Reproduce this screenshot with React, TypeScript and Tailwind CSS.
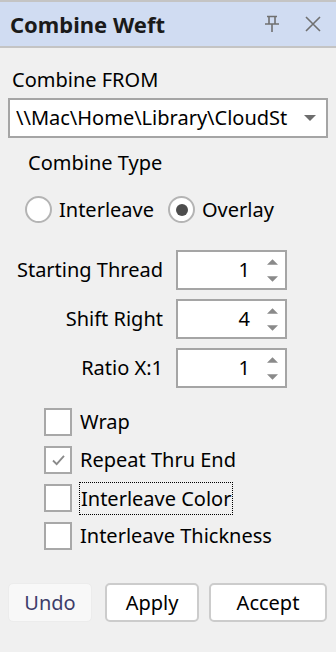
import { useState } from 'react';

const PinIcon = () => (
  <svg width="16" height="18" viewBox="0 0 16 18" fill="none" stroke="#707070" strokeWidth="1.6">
    <path d="M3 1.5h10M5 1.5v7M11 1.5v7M1 9h14M8 9v8" />
  </svg>
);

const CloseIcon = () => (
  <svg width="18" height="18" viewBox="0 0 18 18" fill="none" stroke="#707070" strokeWidth="1.6">
    <path d="M2 2l14 14M16 2L2 16" />
  </svg>
);

const SpinArrows = () => (
  <div className="flex flex-col items-center justify-center gap-[11px] w-[20px]">
    <svg width="11" height="6" viewBox="0 0 12 6">
      <path d="M6 0L12 6H0z" fill="#8a8a8a" />
    </svg>
    <svg width="11" height="6" viewBox="0 0 12 6">
      <path d="M0 0h12L6 6z" fill="#8a8a8a" />
    </svg>
  </div>
);

const Radio = ({ checked }: { checked: boolean }) => (
  <div className="w-[27px] h-[27px] rounded-full border-2 border-[#b4b4b4] bg-white flex items-center justify-center">
    {checked && <div className="w-[12px] h-[12px] rounded-full bg-[#4d4d4d]" />}
  </div>
);

const Check = ({ checked }: { checked: boolean }) => (
  <div className="w-[28px] h-[28px] border-2 border-[#a8a8a8] bg-white flex items-center justify-center">
    {checked && (
      <svg width="13" height="11" viewBox="0 0 14 12" fill="none" stroke="#8a8a8a" strokeWidth="2">
        <path d="M1 6l4 4 8-9" />
      </svg>
    )}
  </div>
);

export default function App() {
  const [type, setType] = useState('overlay');
  const spins = [
    { label: 'Starting Thread', value: '1' },
    { label: 'Shift Right', value: '4' },
    { label: 'Ratio X:1', value: '1' },
  ];
  const checks = [
    { label: 'Wrap', checked: false },
    { label: 'Repeat Thru End', checked: true },
    { label: 'Interleave Color', checked: false, focus: true },
    { label: 'Interleave Thickness', checked: false },
  ];

  return (
    <div
      className="w-[336px] h-[652px] bg-[#f0f0f0] flex flex-col text-black overflow-hidden"
      style={{ fontFamily: '"Noto Sans", "Open Sans", sans-serif' }}
    >
      {/* Title bar */}
      <div className="h-[48px] border-y-2 border-[#c4c4c4] bg-[#d0dcf2] flex items-center pl-[10px] pr-[14px]">
        <span className="text-[22px] font-bold text-[#1a1a1a] flex-1">Combine Weft</span>
        <div className="flex items-center gap-[24px]">
          <PinIcon />
          <CloseIcon />
        </div>
      </div>

      <div className="px-[8px] flex flex-col text-[20px]">
        <div className="mt-[16px] h-[32px] flex items-center pl-[4px]">Combine FROM</div>

        <div className="mt-[2px] h-[40px] border-2 border-[#a5a5a5] bg-white flex items-center pl-[6px] pr-[10px]">
          <span className="flex-1 whitespace-nowrap overflow-hidden">\\Mac\Home\Library\CloudSt</span>
          <svg width="12" height="6" viewBox="0 0 12 6" className="ml-[14px]">
            <path d="M0 0h12L6 6z" fill="#6d6d6d" />
          </svg>
        </div>

        <div className="mt-[9px] h-[32px] flex items-center pl-[20px]">Combine Type</div>

        <div className="mt-[17px] h-[27px] flex items-center pl-[17px]">
          <button className="flex items-center gap-[7px]" onClick={() => setType('interleave')}>
            <Radio checked={type === 'interleave'} />
            <span>Interleave</span>
          </button>
          <button className="flex items-center gap-[7px] ml-[14px]" onClick={() => setType('overlay')}>
            <Radio checked={type === 'overlay'} />
            <span>Overlay</span>
          </button>
        </div>

        <div className="mt-[27px] flex flex-col gap-[9px]">
          {spins.map((s) => (
            <div key={s.label} className="flex items-center h-[40px]">
              <span className="w-[155px] text-right whitespace-nowrap">{s.label}</span>
              <div className="ml-[13px] w-[111px] h-[40px] border-2 border-[#a5a5a5] bg-white flex items-center">
                <span className="flex-1 text-right pr-[12px]">{s.value}</span>
                <SpinArrows />
                <div className="w-[3px]" />
              </div>
            </div>
          ))}
        </div>

        <div className="mt-[20px] flex flex-col gap-[10px] pl-[36px]">
          {checks.map((c) => (
            <div key={c.label} className="flex items-center h-[28px]">
              <Check checked={c.checked} />
              <span
                className={
                  c.focus
                    ? 'ml-[7px] px-[1px] leading-[31px] border border-dotted border-black'
                    : 'ml-[8px]'
                }
              >
                {c.label}
              </span>
            </div>
          ))}
        </div>

        <div className="mt-[33px] flex items-center h-[39px]">
          <button className="w-[84px] h-[39px] rounded-[5px] border border-[#ececec] bg-[#f8f8f8] text-[#3d3d6a]">
            Undo
          </button>
          <button className="ml-[13px] w-[94px] h-[39px] rounded-[5px] border-2 border-[#cccccc] bg-white">
            Apply
          </button>
          <button className="ml-[10px] w-[118px] h-[39px] rounded-[5px] border-2 border-[#cccccc] bg-white">
            Accept
          </button>
        </div>
      </div>
    </div>
  );
}
